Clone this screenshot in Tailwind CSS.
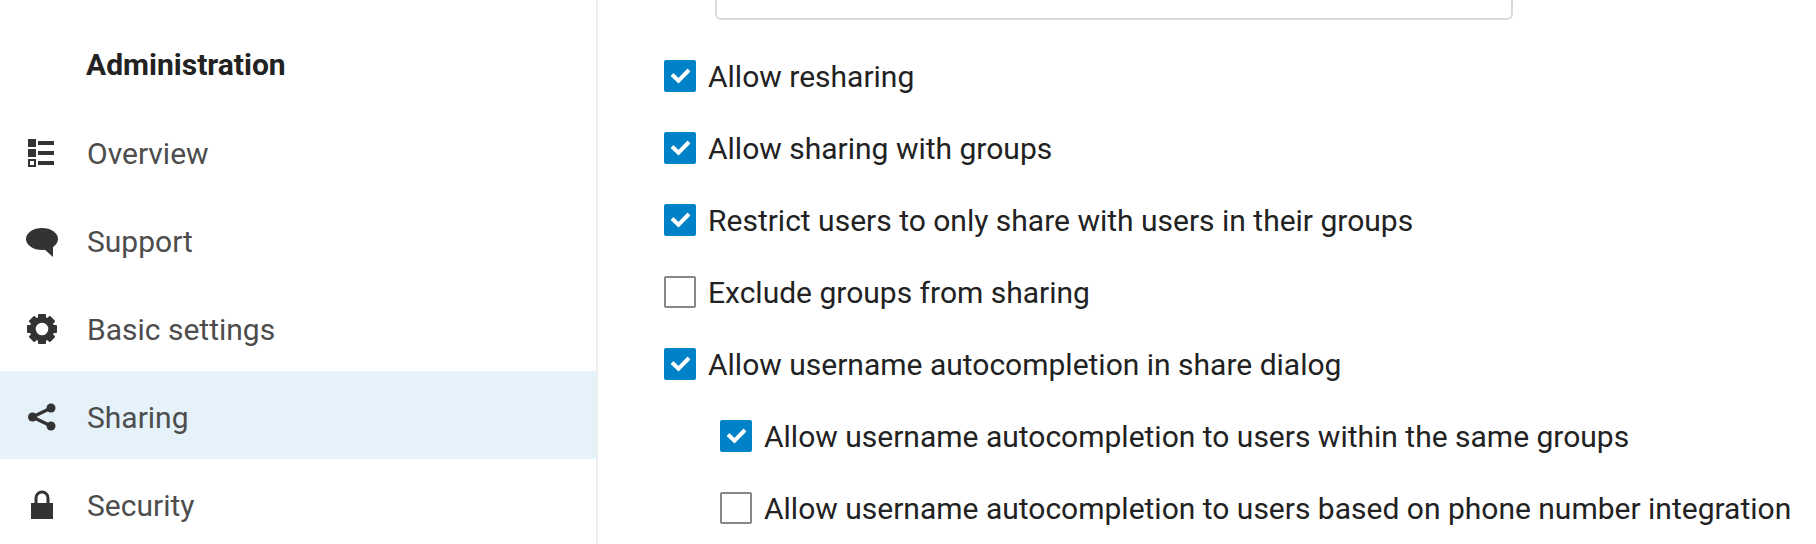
<!DOCTYPE html>
<html lang="en">
<head>
  <meta charset="UTF-8">
  <title>Sharing</title>
  <script src="https://cdn.jsdelivr.net/npm/@tailwindcss/browser@4"></script>
</head>
<body class="bg-white font-['Roboto',sans-serif] h-[544px] overflow-hidden">
  <div class="flex h-[544px] overflow-hidden">

    <!-- Sidebar -->
    <aside class="w-[598px] shrink-0 border-r-2 border-[#ededed] pt-[19px] text-[30px] text-[#4d4d4d]">
      <h2 class="h-[88px] pl-[86px] pt-[2px] flex items-center font-bold text-[#222222]">Administration</h2>
      <ul>
        <li class="h-[88px] pt-[4px] pl-[26px] flex items-center gap-[29px]">
          <svg class="w-8 h-8 shrink-0" viewBox="0 0 32 32" fill="#333333">
            <rect x="2" y="2" width="8" height="8"/><rect x="2" y="12" width="8" height="8"/>
            <rect x="3" y="23" width="6" height="6" fill="none" stroke="#333333" stroke-width="2"/>
            <rect x="12" y="4" width="16" height="4"/><rect x="12" y="14" width="16" height="4"/><rect x="12" y="24" width="16" height="4"/>
          </svg>
          <span>Overview</span>
        </li>
        <li class="h-[88px] pt-[4px] pl-[26px] flex items-center gap-[29px]">
          <svg class="w-8 h-8 shrink-0" viewBox="0 0 32 32" fill="#333333">
            <ellipse cx="16" cy="14" rx="16" ry="11"/><polygon points="17,23 27,32 27,21"/>
          </svg>
          <span>Support</span>
        </li>
        <li class="h-[88px] pt-[4px] pl-[26px] flex items-center gap-[29px]">
          <svg class="w-8 h-8 shrink-0" viewBox="0 0 32 32" fill="#333333">
            <circle cx="16" cy="16" r="9.300" fill="none" stroke="#333333" stroke-width="6"/>
            <g>
              <rect x="12" y="1" width="8" height="6" rx="1"/>
              <rect x="12" y="1" width="8" height="6" rx="1" transform="rotate(45 16 16)"/>
              <rect x="12" y="1" width="8" height="6" rx="1" transform="rotate(90 16 16)"/>
              <rect x="12" y="1" width="8" height="6" rx="1" transform="rotate(135 16 16)"/>
              <rect x="12" y="1" width="8" height="6" rx="1" transform="rotate(180 16 16)"/>
              <rect x="12" y="1" width="8" height="6" rx="1" transform="rotate(225 16 16)"/>
              <rect x="12" y="1" width="8" height="6" rx="1" transform="rotate(270 16 16)"/>
              <rect x="12" y="1" width="8" height="6" rx="1" transform="rotate(315 16 16)"/>
            </g>
          </svg>
          <span>Basic settings</span>
        </li>
        <li class="h-[88px] pt-[4px] pl-[26px] flex items-center gap-[29px] bg-[#e5f2fa]">
          <svg class="w-8 h-8 shrink-0" viewBox="0 0 32 32" fill="#333333">
            <path d="M6.500 16 25 7M6.500 16 25 25" stroke="#333333" stroke-width="3.500" fill="none"/>
            <circle cx="6.500" cy="16" r="4.500"/><circle cx="25" cy="7" r="4.500"/><circle cx="25" cy="25" r="4.500"/>
          </svg>
          <span>Sharing</span>
        </li>
        <li class="h-[88px] pt-[4px] pl-[26px] flex items-center gap-[29px]">
          <svg class="w-8 h-8 shrink-0" viewBox="0 0 32 32" fill="#333333">
            <path d="M10 15V9a6 6 0 0 1 12 0v6" fill="none" stroke="#333333" stroke-width="3"/>
            <rect x="5" y="14" width="22" height="16"/>
          </svg>
          <span>Security</span>
        </li>
      </ul>
    </aside>

    <!-- Settings -->
    <main class="flex-1 pl-[66px] text-[30px] text-[#222222]">
      <div class="ml-[51px] w-[798px] h-[20px] border-2 border-t-0 border-[#dbdbdb] rounded-b-[6px] mb-[20px]"></div>

      <label class="h-[72px] flex items-center gap-3 whitespace-nowrap">
        <span class="w-8 h-8 shrink-0 rounded-[2px] bg-[#0082c9]"><svg class="w-8 h-8" viewBox="0 0 32 32" fill="none" stroke="#ffffff" stroke-width="4"><path d="M8 14.500 14.500 20.700 25 10"/></svg></span>
        <span>Allow resharing</span>
      </label>
      <label class="h-[72px] flex items-center gap-3 whitespace-nowrap">
        <span class="w-8 h-8 shrink-0 rounded-[2px] bg-[#0082c9]"><svg class="w-8 h-8" viewBox="0 0 32 32" fill="none" stroke="#ffffff" stroke-width="4"><path d="M8 14.500 14.500 20.700 25 10"/></svg></span>
        <span>Allow sharing with groups</span>
      </label>
      <label class="h-[72px] flex items-center gap-3 whitespace-nowrap">
        <span class="w-8 h-8 shrink-0 rounded-[2px] bg-[#0082c9]"><svg class="w-8 h-8" viewBox="0 0 32 32" fill="none" stroke="#ffffff" stroke-width="4"><path d="M8 14.500 14.500 20.700 25 10"/></svg></span>
        <span>Restrict users to only share with users in their groups</span>
      </label>
      <label class="h-[72px] flex items-center gap-3 whitespace-nowrap">
        <span class="w-8 h-8 shrink-0 rounded-[2px] border-2 border-[#878787]"></span>
        <span>Exclude groups from sharing</span>
      </label>
      <label class="h-[72px] flex items-center gap-3 whitespace-nowrap">
        <span class="w-8 h-8 shrink-0 rounded-[2px] bg-[#0082c9]"><svg class="w-8 h-8" viewBox="0 0 32 32" fill="none" stroke="#ffffff" stroke-width="4"><path d="M8 14.500 14.500 20.700 25 10"/></svg></span>
        <span>Allow username autocompletion in share dialog</span>
      </label>
      <label class="h-[72px] pl-14 flex items-center gap-3 whitespace-nowrap">
        <span class="w-8 h-8 shrink-0 rounded-[2px] bg-[#0082c9]"><svg class="w-8 h-8" viewBox="0 0 32 32" fill="none" stroke="#ffffff" stroke-width="4"><path d="M8 14.500 14.500 20.700 25 10"/></svg></span>
        <span>Allow username autocompletion to users within the same groups</span>
      </label>
      <label class="h-[72px] pl-14 flex items-center gap-3 whitespace-nowrap">
        <span class="w-8 h-8 shrink-0 rounded-[2px] border-2 border-[#878787]"></span>
        <span>Allow username autocompletion to users based on phone number integration</span>
      </label>
    </main>
  </div>
</body>
</html>
